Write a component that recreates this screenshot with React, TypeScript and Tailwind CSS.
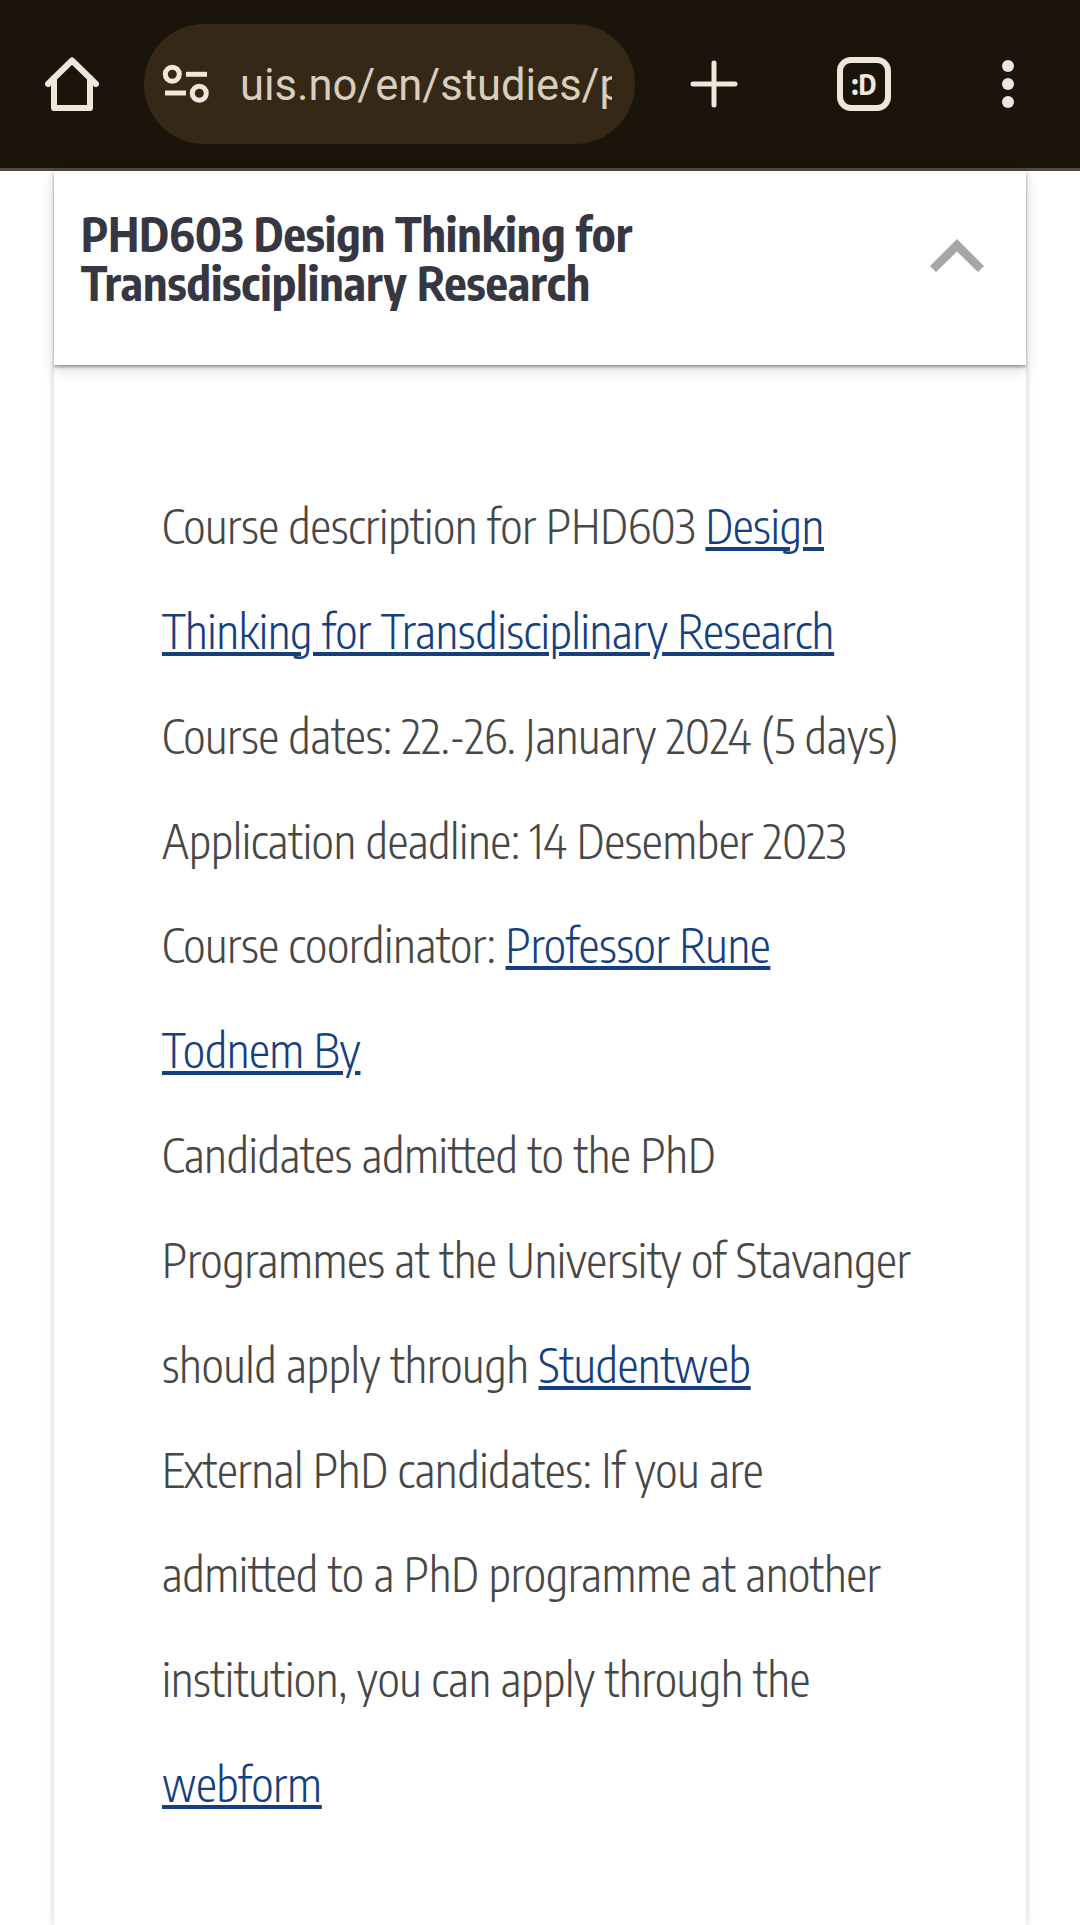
function HomeIcon() {
  return (
    <svg viewBox="0 0 54 54" className="w-[54px] h-[54px]" fill="none" stroke="#efe6dc" strokeWidth="6" strokeLinejoin="round" strokeLinecap="round">
      <path d="M3 27 L27 3.5 L51 27" />
      <path d="M9 21 V51 H45 V21" />
    </svg>
  );
}

function TuneIcon() {
  return (
    <svg viewBox="0 0 52 40" className="w-[52px] h-10" fill="none" stroke="#efe6dc" strokeWidth="5">
      <circle cx="12.3" cy="10.3" r="7" />
      <path d="M26 10.3 H47" />
      <path d="M5 29 H26" />
      <circle cx="39.3" cy="29.3" r="7" />
    </svg>
  );
}

function Line({ children }: { children: React.ReactNode }) {
  return <p className="h-[104.85px] leading-[104.85px] whitespace-nowrap">{children}</p>;
}

function A({ children }: { children: React.ReactNode }) {
  return <a className="text-[#163f7f] underline decoration-[3.5px] underline-offset-[3px]">{children}</a>;
}

export default function App() {
  return (
    <div className="w-[1080px] h-[1925px] overflow-hidden bg-white font-['Encode_Sans_Condensed','Roboto_Condensed','Open_Sans',sans-serif]">
      <header className="h-[171px] bg-[#1a140a] border-b-[3px] border-[#50493e] flex items-center pl-[45px] font-['Roboto',sans-serif]">
        <HomeIcon />
        <div className="ml-[45px] w-[491px] h-[120px] rounded-[60px] bg-[#352816] flex items-center pl-[16px]">
          <TuneIcon />
          <div className="ml-[28px] mt-1 w-[372px] overflow-hidden whitespace-nowrap text-[43.5px] text-[#d9cdbe]">uis.no/en/studies/phd</div>
        </div>
        <svg viewBox="0 0 48 48" className="ml-[55px] w-12 h-12" stroke="#efe6dc" strokeWidth="5" strokeLinecap="round">
          <path d="M24 3 V45 M3 24 H45" />
        </svg>
        <div className="ml-[99px] w-[54px] h-[54px] rounded-[14px] border-[6px] border-[#efe6dc] flex items-center justify-center text-[28px] font-bold text-[#efe6dc] font-['Encode_Sans_Condensed','Roboto',sans-serif]">:D</div>
        <div className="ml-[111px] flex flex-col gap-[6px]">
          <span className="w-3 h-3 rounded-full bg-[#efe6dc]" />
          <span className="w-3 h-3 rounded-full bg-[#efe6dc]" />
          <span className="w-3 h-3 rounded-full bg-[#efe6dc]" />
        </div>
      </header>
      <main className="mx-[54px] w-[972px]">
        <section className="relative z-10 h-[194px] bg-white shadow-[0_2px_3px_rgba(0,0,0,0.36),0_4px_14px_rgba(0,0,0,0.16)] flex items-center justify-between pl-[27px] pr-[42px]">
          <h2 className="text-[46.7px] leading-[49px] font-bold text-[#363743] mb-[20px]">
            PHD603 Design Thinking for<br />Transdisciplinary Research
          </h2>
          <svg viewBox="0 0 54 33" className="w-[54px] h-[33px] mb-[25px]" fill="#a6a6a6">
            <path d="M27 0 L54 27 L48 33 L27 12.5 L6 33 L0 27 Z" />
          </svg>
        </section>
        <section className="h-[1560px] pl-[108px] pt-[108px] text-[46.7px] text-[#474747] font-light shadow-[0_0_7px_rgba(0,0,0,0.22)]">
          <Line>Course description for PHD603 <A>Design</A></Line>
          <Line><A>Thinking for Transdisciplinary Research</A></Line>
          <Line>Course dates: 22.-26. January 2024 (5 days)</Line>
          <Line>Application deadline: 14 Desember 2023</Line>
          <Line>Course coordinator: <A>Professor Rune</A></Line>
          <Line><A>Todnem By</A></Line>
          <Line>Candidates admitted to the PhD</Line>
          <Line>Programmes at the University of Stavanger</Line>
          <Line>should apply through <A>Studentweb</A></Line>
          <Line>External PhD candidates: If you are</Line>
          <Line>admitted to a PhD programme at another</Line>
          <Line>institution, you can apply through the</Line>
          <Line><A>webform</A></Line>
        </section>
      </main>
    </div>
  );
}
